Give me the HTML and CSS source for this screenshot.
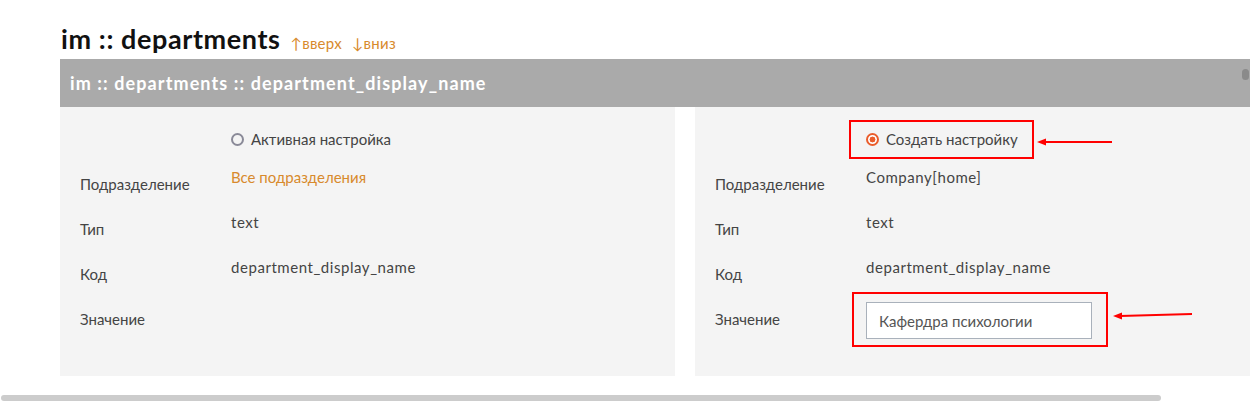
FILE: index.html
```html
<!DOCTYPE html>
<html lang="ru">
<head>
<meta charset="utf-8">
<title>im :: departments</title>
<link rel="stylesheet" href="styles.css">
</head>
<body>
<div class="page">
  <div class="title-row">
    <h1 class="title">im :: departments</h1>
    <a class="nav-link" href="#">↑вверх</a>
    <a class="nav-link" href="#">↓вниз</a>
  </div>
  <div class="bar">
    <span class="bar-title">im :: departments :: department_display_name</span>
    <span class="bar-thumb"></span>
  </div>
  <div class="panels">
    <div class="panel">
      <div class="label"></div>
      <div class="value radio-cell">
        <span class="radio"></span>
        <span>Активная настройка</span>
      </div>
      <div class="label">Подразделение</div>
      <div class="value link">Все подразделения</div>
      <div class="label">Тип</div>
      <div class="value latin">text</div>
      <div class="label">Код</div>
      <div class="value latin">department_display_name</div>
      <div class="label">Значение</div>
      <div class="value"></div>
    </div>
    <div class="panel">
      <div class="label"></div>
      <div class="value radio-cell marked">
        <span class="radio radio-on"></span>
        <span>Создать настройку</span>
        <span class="mark mark-radio"></span>
        <svg class="arrow arrow-radio" width="80" height="10" viewBox="0 0 80 10"><line x1="8" y1="5" x2="76" y2="5" stroke="#ff0000" stroke-width="2"/><path d="M1 5 L10 1.5 L10 8.5 Z" fill="#ff0000"/></svg>
      </div>
      <div class="label">Подразделение</div>
      <div class="value latin">Company[home]</div>
      <div class="label">Тип</div>
      <div class="value latin">text</div>
      <div class="label">Код</div>
      <div class="value latin">department_display_name</div>
      <div class="label">Значение</div>
      <div class="value input-cell marked">
        <input class="input" type="text" value="Кафердра психологии">
        <span class="mark mark-input"></span>
        <svg class="arrow arrow-input" width="82" height="10" viewBox="0 0 82 10"><line x1="8" y1="6" x2="80" y2="4" stroke="#ff0000" stroke-width="2"/><path d="M1 6 L10 2.5 L10 9.5 Z" fill="#ff0000"/></svg>
      </div>
    </div>
  </div>
  <div class="hscroll"></div>
</div>
</body>
</html>
```
FILE: styles.css
```css
html, body {
  margin: 0;
  padding: 0;
  background: #ffffff;
  overflow: hidden;
}
body {
  font-family: "Lato", "Open Sans", "Liberation Sans", sans-serif;
  color: #333333;
}
.page {
  width: 1250px;
  height: 403px;
  overflow: hidden;
}
.title-row {
  display: flex;
  align-items: baseline;
  gap: 10px;
  padding: 23px 0 0 61px;
  height: 59px;
  box-sizing: border-box;
}
.title {
  margin: 0;
  font-size: 27px;
  line-height: 32px;
  font-weight: 700;
  color: #111111;
  letter-spacing: 0.6px;
}
.nav-link {
  color: #d88a2c;
  font-size: 15px;
  text-decoration: none;
  letter-spacing: 0.3px;
}
.bar {
  margin-left: 60px;
  width: 1250px;
  height: 48px;
  background: #aaaaaa;
  display: flex;
  align-items: center;
  padding-left: 10px;
  box-sizing: border-box;
  position: relative;
}
.bar-title {
  color: #ffffff;
  font-weight: 700;
  font-size: 18px;
  letter-spacing: 1.1px;
}
.bar-thumb {
  position: absolute;
  left: 1182px;
  top: 10px;
  width: 7px;
  height: 11px;
  border-radius: 4px;
  background: #8a8a8a;
}
.panels {
  display: grid;
  grid-template-columns: 615px 615px;
  gap: 20px;
  margin-left: 60px;
}
.panel {
  background: #f4f4f4;
  display: grid;
  grid-template-columns: 151px 1fr;
  grid-auto-rows: 45px;
  padding: 10px 20px 34px 20px;
  font-size: 15px;
  line-height: 20px;
}
.label {
  padding-top: 12px;
  color: #444444;
}
.value {
  padding-top: 5px;
  color: #444444;
  position: relative;
}
.latin {
  letter-spacing: 0.55px;
}
.radio-cell {
  padding-top: 12px;
  display: flex;
  align-items: center;
  gap: 7px;
  height: 20px;
}
.radio {
  width: 13px;
  height: 13px;
  border-radius: 50%;
  border: 2px solid #8a8a98;
  box-sizing: border-box;
  flex: none;
}
.radio-on {
  border-color: #ea5d2c;
  background: radial-gradient(circle, #ea5d2c 0 2.7px, #ffffff 3.2px);
}
.link {
  color: #d88a2c;
}
.input {
  display: block;
  width: 226px;
  height: 37px;
  box-sizing: border-box;
  border: 1px solid #a9b1bb;
  background: #ffffff;
  padding: 0 12px;
  font-family: inherit;
  font-size: 15px;
  color: #555555;
  outline: none;
}
.mark {
  position: absolute;
  border: 2px solid #ff0000;
  box-sizing: border-box;
  pointer-events: none;
}
.mark-radio {
  left: -17px;
  top: 3px;
  width: 185px;
  height: 39px;
}
.mark-input {
  left: -14px;
  top: -5px;
  width: 256px;
  height: 55px;
}
.arrow {
  position: absolute;
  overflow: visible;
}
.arrow-radio {
  left: 170px;
  top: 20px;
}
.arrow-input {
  left: 246px;
  top: 13px;
}
.hscroll {
  margin: 19px 0 0 1px;
  width: 1160px;
  height: 6px;
  border-radius: 3px;
  background: #cccccc;
}
```
